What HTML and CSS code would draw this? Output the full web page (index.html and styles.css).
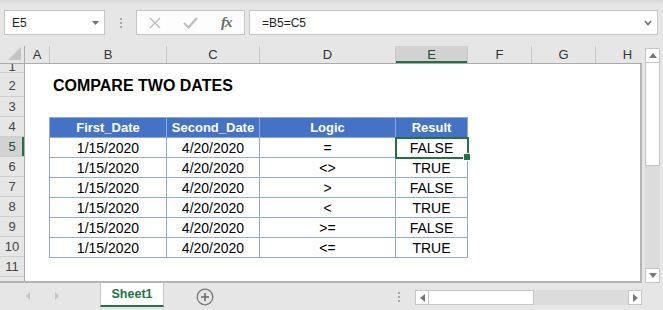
FILE: index.html
```html
<!DOCTYPE html>
<html lang="en">
<head>
    <meta charset="UTF-8">
    <meta name="viewport" content="width=device-width, initial-scale=1.0">
    <title>Compare Two Dates</title>
    <link rel="stylesheet" href="styles.css">
</head>
<body>
    <div class="app">
        <header class="formula-bar">
            <div class="name-box">
                <span>E5</span>
                <svg class="caret" width="7" height="4" viewBox="0 0 7 4"><polygon points="0,0 7,0 3.5,4" fill="#707070"/></svg>
            </div>
            <div class="grip"><i></i><i></i><i></i></div>
            <div class="fx-buttons">
                <span class="fx-btn">
                    <svg width="12" height="12" viewBox="0 0 12 12"><path d="M1 1 L11 11 M11 1 L1 11" stroke="#bdbdbd" stroke-width="1.4" fill="none"/></svg>
                </span>
                <span class="fx-btn">
                    <svg width="15" height="12" viewBox="0 0 15 12"><polyline points="1,6 5.5,10.5 14,1" stroke="#bdbdbd" stroke-width="2.2" fill="none"/></svg>
                </span>
                <span class="fx-btn fx">fx</span>
            </div>
            <div class="formula-input">
                <span>=B5=C5</span>
                <svg width="8" height="6" viewBox="0 0 8 6"><polyline points="1,1 4,4.5 7,1" stroke="#777" stroke-width="1.8" fill="none"/></svg>
            </div>
        </header>

        <div class="workarea">
            <div class="grid-area">
                <div class="col-heads">
                    <div class="col-head corner">
                        <svg width="14" height="14" viewBox="0 0 14 14"><polygon points="13,0 13,13 0,13" fill="#c4c4c4"/></svg>
                    </div>
                    <div class="col-head w-a">A</div>
                    <div class="col-head w-b">B</div>
                    <div class="col-head w-c">C</div>
                    <div class="col-head w-d">D</div>
                    <div class="col-head w-e active">E</div>
                    <div class="col-head w-f">F</div>
                    <div class="col-head w-f">G</div>
                    <div class="col-head w-f">H</div>
                </div>

                <div class="sheet">
                    <div class="row-heads">
                        <div class="row-head first"><span>1</span></div>
                        <div class="row-head tall">2</div>
                        <div class="row-head">3</div>
                        <div class="row-head">4</div>
                        <div class="row-head active">5</div>
                        <div class="row-head">6</div>
                        <div class="row-head">7</div>
                        <div class="row-head">8</div>
                        <div class="row-head">9</div>
                        <div class="row-head">10</div>
                        <div class="row-head">11</div>
                        <div class="row-head rest"></div>
                    </div>

                    <div class="cells">
                        <div class="title">COMPARE TWO DATES</div>
                        <table class="data">
                            <colgroup>
                                <col class="c-b">
                                <col class="c-c">
                                <col class="c-d">
                                <col class="c-e">
                            </colgroup>
                            <tr>
                                <th>First_Date</th>
                                <th>Second_Date</th>
                                <th>Logic</th>
                                <th>Result</th>
                            </tr>
                            <tr>
                                <td>1/15/2020</td><td>4/20/2020</td><td>=</td><td class="selected">FALSE</td>
                            </tr>
                            <tr>
                                <td>1/15/2020</td><td>4/20/2020</td><td>&lt;&gt;</td><td>TRUE</td>
                            </tr>
                            <tr>
                                <td>1/15/2020</td><td>4/20/2020</td><td>&gt;</td><td>FALSE</td>
                            </tr>
                            <tr>
                                <td>1/15/2020</td><td>4/20/2020</td><td>&lt;</td><td>TRUE</td>
                            </tr>
                            <tr>
                                <td>1/15/2020</td><td>4/20/2020</td><td>&gt;=</td><td>FALSE</td>
                            </tr>
                            <tr>
                                <td>1/15/2020</td><td>4/20/2020</td><td>&lt;=</td><td>TRUE</td>
                            </tr>
                        </table>
                    </div>
                </div>
            </div>

            <div class="vscroll">
                <div class="sb-btn">
                    <svg width="8" height="5" viewBox="0 0 8 5"><polygon points="0,5 8,5 4,0" fill="#777"/></svg>
                </div>
                <div class="sb-thumb"></div>
                <div class="sb-track"></div>
                <div class="sb-btn">
                    <svg width="8" height="5" viewBox="0 0 8 5"><polygon points="0,0 8,0 4,5" fill="#777"/></svg>
                </div>
            </div>
        </div>

        <footer class="tab-bar">
            <div class="tab-nav">
                <svg width="4" height="8" viewBox="0 0 4 8"><polygon points="4,0 4,8 0,4" fill="#c2c2c2"/></svg>
                <svg width="4" height="8" viewBox="0 0 4 8"><polygon points="0,0 0,8 4,4" fill="#c2c2c2"/></svg>
            </div>
            <div class="tab">Sheet1</div>
            <div class="add-sheet">
                <svg width="18" height="18" viewBox="0 0 18 18">
                    <circle cx="9" cy="9" r="7.8" stroke="#7a7a7a" stroke-width="1.3" fill="none"/>
                    <path d="M9 5 V13 M5 9 H13" stroke="#6a6a6a" stroke-width="1.6"/>
                </svg>
            </div>
            <div class="grip small"><i></i><i></i><i></i></div>
            <div class="hscroll">
                <div class="sb-btn">
                    <svg width="5" height="8" viewBox="0 0 5 8"><polygon points="5,0 5,8 0,4" fill="#777"/></svg>
                </div>
                <div class="sb-thumb"></div>
                <div class="sb-track"></div>
                <div class="sb-btn">
                    <svg width="5" height="8" viewBox="0 0 5 8"><polygon points="0,0 0,8 5,4" fill="#777"/></svg>
                </div>
            </div>
        </footer>
    </div>
</body>
</html>
```

FILE: styles.css
```css
*{
    box-sizing: border-box;
}

body{
    margin: 0;
    background-color: #e6e6e6;
    font-family: "Liberation Sans", Arial, sans-serif;
    color: #000;
}

.app{
    width: 663px;
    height: 310px;
    display: flex;
    flex-direction: column;
    overflow: hidden;
}

/* Formula bar */
.formula-bar{
    height: 46px;
    flex-shrink: 0;
    display: flex;
    align-items: flex-start;
    padding: 10px 5px 0 4px;
    background: linear-gradient(#d9d9d9, #e6e6e6 5px);
}

.name-box{
    width: 101px;
    height: 25px;
    display: flex;
    align-items: center;
    justify-content: space-between;
    padding: 0 5px 0 7px;
    background-color: #fff;
    border: 1px solid #c6c6c6;
    font-size: 12px;
    color: #222;
}

.grip{
    width: 31px;
    height: 25px;
    display: flex;
    flex-direction: column;
    align-items: center;
    justify-content: center;
    gap: 2px;
}

.grip i{
    display: block;
    width: 2px;
    height: 2px;
    background-color: #a8a8a8;
}

.fx-buttons{
    width: 109px;
    height: 25px;
    display: flex;
    align-items: center;
    background-color: #fdfdfd;
    border: 1px solid #c6c6c6;
}

.fx-btn{
    width: 36px;
    display: flex;
    justify-content: center;
    align-items: center;
}

.fx{
    font-family: "Liberation Serif", serif;
    font-style: italic;
    font-weight: bold;
    font-size: 15px;
    color: #6a6a6a;
    letter-spacing: -1px;
}

.formula-input{
    flex: 1;
    height: 25px;
    margin-left: 4px;
    display: flex;
    align-items: center;
    justify-content: space-between;
    padding: 0 5px 0 12px;
    background-color: #fff;
    border: 1px solid #c6c6c6;
    font-size: 12px;
    color: #222;
}

/* Grid */
.workarea{
    flex: 1;
    display: flex;
}

.grid-area{
    width: 642px;
    display: flex;
    flex-direction: column;
}

.col-heads{
    height: 18px;
    display: flex;
    overflow: hidden;
    border-bottom: 1px solid #ababab;
}

.col-head{
    flex-shrink: 0;
    display: flex;
    align-items: center;
    justify-content: center;
    border-right: 1px solid #c8c8c8;
    font-size: 13px;
    color: #333;
}

.corner{
    width: 25px;
    align-items: flex-end;
    justify-content: flex-end;
    padding: 0 2px 2px 0;
    border-right-color: #ababab;
}

.w-a{ width: 25px; }
.w-b{ width: 117px; }
.w-c{ width: 93px; }
.w-d{ width: 136px; }
.w-e{ width: 72px; }
.w-f{ width: 64px; }

.col-head.active{
    background-color: #d2d2d2;
    box-shadow: inset 0 -2px #217346;
    color: #1f4e36;
}

.sheet{
    flex: 1;
    display: flex;
    background-color: #fff;
    border-right: 2px solid #b4b4b4;
    border-bottom: 2px solid #b4b4b4;
}

.row-heads{
    width: 25px;
    display: flex;
    flex-direction: column;
    background-color: #e6e6e6;
    border-right: 1px solid #ababab;
}

.row-head{
    height: 20px;
    line-height: 19px;
    text-align: center;
    font-size: 13px;
    color: #444;
    border-bottom: 1px solid #cfcfcf;
    overflow: hidden;
}

.row-head.first{
    height: 9px;
}

.row-head.first span{
    display: block;
    line-height: 20px;
    margin-top: -7px;
}

.row-head.tall{
    height: 24px;
    line-height: 25px;
}

.row-head.rest{
    flex: 1;
    border-bottom: none;
}

.row-head.active{
    background-color: #d2d2d2;
    box-shadow: inset -2px 0 #217346;
    color: #1f4e36;
}

.cells{
    flex: 1;
    padding-top: 9px;
}

.title{
    height: 24px;
    line-height: 26px;
    padding-left: 28px;
    font-size: 16px;
    font-weight: bold;
}

.data{
    margin: 20px 0 0 24px;
    border-collapse: collapse;
    table-layout: fixed;
    width: 419px;
}

.c-b{ width: 117px; }
.c-c{ width: 93px; }
.c-d{ width: 136px; }
.c-e{ width: 72px; }

.data tr{
    height: 20px;
}

.data th,
.data td{
    padding: 0;
    border: 1px solid #8ea9db;
    text-align: center;
    font-size: 14px;
    line-height: 18px;
}

.data th{
    background-color: #4472c4;
    color: #fff;
    font-size: 13px;
}

.data td.selected{
    position: relative;
    outline: 2px solid #217346;
    outline-offset: -1px;
}

.data td.selected::after{
    content: "";
    position: absolute;
    right: -4px;
    bottom: -4px;
    width: 6px;
    height: 6px;
    background-color: #217346;
    border: 1px solid #fff;
}

/* Scroll bars */
.vscroll{
    width: 21px;
    display: flex;
    flex-direction: column;
    padding: 2px 3px 0 3px;
}

.sb-btn{
    flex-shrink: 0;
    display: flex;
    align-items: center;
    justify-content: center;
    background-color: #fff;
    border: 1px solid #c6c6c6;
}

.vscroll .sb-btn{
    height: 15px;
}

.vscroll .sb-thumb{
    height: 103px;
    background-color: #fff;
    border: 1px solid #c6c6c6;
    border-top: none;
}

.sb-track{
    flex: 1;
    background-color: #dcdcdc;
}

/* Sheet tabs */
.tab-bar{
    height: 27px;
    flex-shrink: 0;
    display: flex;
    align-items: flex-start;
}

.tab-nav{
    width: 100px;
    height: 27px;
    display: flex;
    align-items: center;
    gap: 25px;
    padding: 0 0 2px 26px;
}

.tab{
    width: 64px;
    height: 24px;
    line-height: 22px;
    text-align: center;
    background-color: #fff;
    border-left: 1px solid #c6c6c6;
    border-right: 1px solid #c6c6c6;
    border-bottom: 2px solid #217346;
    font-size: 12.5px;
    font-weight: bold;
    color: #217346;
}

.add-sheet{
    margin: 5px 0 0 32px;
    display: flex;
}

.grip.small{
    width: 2px;
    height: 15px;
    margin: 6px 0 0 184px;
}

.hscroll{
    width: 227px;
    height: 15px;
    margin: 7px 0 0 15px;
    display: flex;
}

.hscroll .sb-btn{
    width: 14px;
}

.hscroll .sb-thumb{
    width: 105px;
    background-color: #fff;
    border: 1px solid #c6c6c6;
    border-left: none;
}
```
